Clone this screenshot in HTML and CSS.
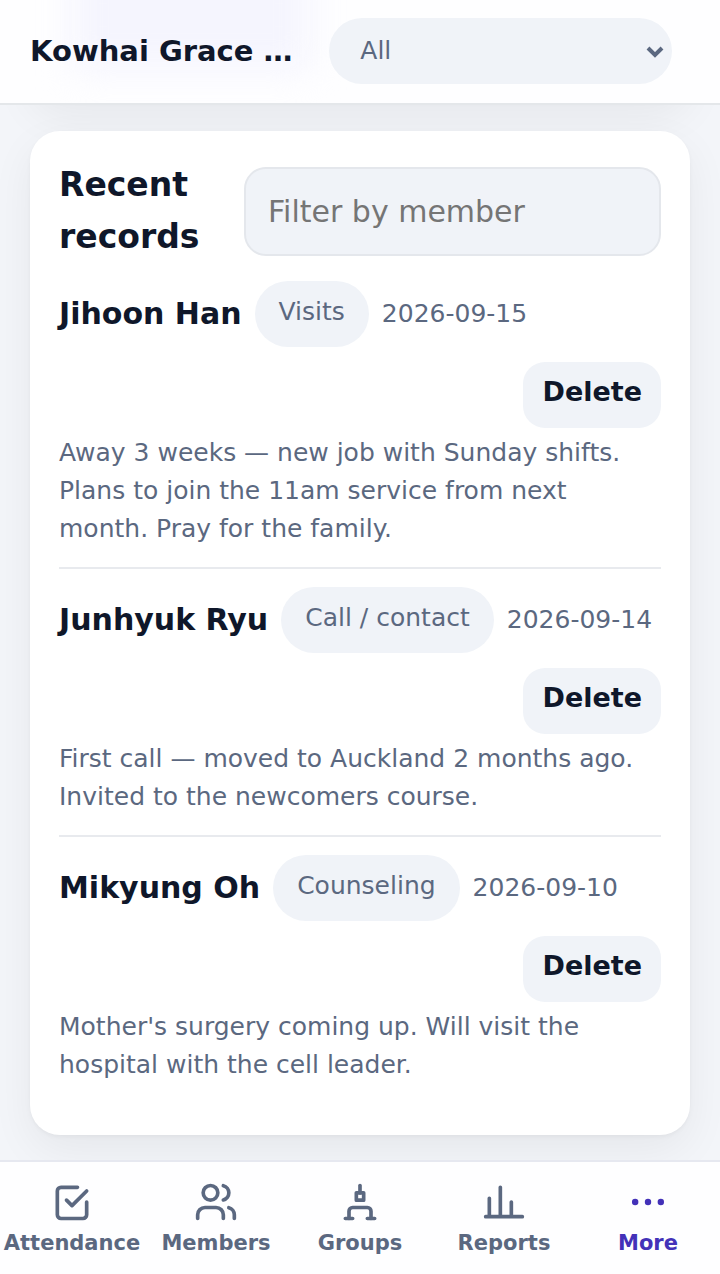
FILE: index.html
```html
<!DOCTYPE html>
<html lang="en">
<head>
    <meta charset="UTF-8">
    <meta name="viewport" content="width=device-width, initial-scale=1.0">
    <title>Kowhai Grace</title>
    <link rel="stylesheet" href="styles.css">
</head>
<body>
    <header class="topbar">
        <div class="brand">Kowhai Grace …</div>
        <div class="scope">
            <select class="scope-select" aria-label="Group">
                <option>All</option>
            </select>
            <svg class="scope-arrow" viewBox="0 0 18 12" aria-hidden="true"><path d="M2 2l7 7 7-7"/></svg>
        </div>
    </header>

    <main class="content">
        <div class="card card-previous"></div>

        <section class="card">
            <div class="card-head">
                <h2 class="card-title">Recent records</h2>
                <input class="filter" type="text" placeholder="Filter by member" aria-label="Filter by member">
            </div>

            <article class="record">
                <div class="record-row">
                    <strong class="name">Jihoon Han</strong>
                    <span class="pill">Visits</span>
                    <span class="date">2026-09-15</span>
                    <button class="delete" type="button">Delete</button>
                </div>
                <p class="note">Away 3 weeks — new job with Sunday shifts. Plans to join the 11am service from next month. Pray for the family.</p>
            </article>

            <article class="record">
                <div class="record-row">
                    <strong class="name">Junhyuk Ryu</strong>
                    <span class="pill">Call / contact</span>
                    <span class="date">2026-09-14</span>
                    <button class="delete" type="button">Delete</button>
                </div>
                <p class="note">First call — moved to Auckland 2 months ago. Invited to the newcomers course.</p>
            </article>

            <article class="record">
                <div class="record-row">
                    <strong class="name">Mikyung Oh</strong>
                    <span class="pill">Counseling</span>
                    <span class="date">2026-09-10</span>
                    <button class="delete" type="button">Delete</button>
                </div>
                <p class="note">Mother's surgery coming up. Will visit the hospital with the cell leader.</p>
            </article>
        </section>
    </main>

    <nav class="tabs">
        <a class="tab" href="#attendance">
            <svg class="icon" viewBox="0 0 24 24"><path d="M9 11l3 3 8-8"/><path d="M20 12v7a2 2 0 0 1-2 2H6a2 2 0 0 1-2-2V6a2 2 0 0 1 2-2h9"/></svg>
            <span>Attendance</span>
        </a>
        <a class="tab" href="#members">
            <svg class="icon" viewBox="0 0 24 24"><circle cx="9" cy="7" r="4"/><path d="M16 21v-2a4 4 0 0 0-4-4H6a4 4 0 0 0-4 4v2"/><path d="M22 21v-2a4 4 0 0 0-3-3.87"/><path d="M16 3.13a4 4 0 0 1 0 7.75"/></svg>
            <span>Members</span>
        </a>
        <a class="tab" href="#groups">
            <svg class="icon" viewBox="0 0 24 24"><path d="M12 3v4"/><path d="M10 7h4v4h-4z"/><path d="M6 21v-4a2 2 0 0 1 2-2h8a2 2 0 0 1 2 2v4"/><path d="M4 21h4M16 21h4"/></svg>
            <span>Groups</span>
        </a>
        <a class="tab" href="#reports">
            <svg class="icon" viewBox="0 0 24 24"><path d="M4 20V10M10 20V4M16 20v-8M2 20h20"/></svg>
            <span>Reports</span>
        </a>
        <a class="tab active" href="#more">
            <svg class="icon icon-dots" viewBox="0 0 24 24"><circle cx="5" cy="12" r="1.75"/><circle cx="12" cy="12" r="1.75"/><circle cx="19" cy="12" r="1.75"/></svg>
            <span>More</span>
        </a>
    </nav>
</body>
</html>
```

FILE: styles.css
```css
* {
    box-sizing: border-box;
}
body {
    margin: 0;
    background-color: #f3f5f9;
    color: #0f172a;
    font-family: "DejaVu Sans", sans-serif;
    font-size: 25px;
    line-height: 38px;
}

/* top bar */
.topbar {
    position: fixed;
    top: 0;
    left: 0;
    right: 0;
    z-index: 2;
    display: flex;
    align-items: center;
    gap: 30px;
    padding: 18px 48px 19px 30px;
    background-color: #fefeff;
    border-bottom: 2px solid #e4e7ea;
    overflow: hidden;
}
.topbar::before {
    content: "";
    position: absolute;
    top: -40px;
    left: 10%;
    width: 33%;
    height: 110px;
    background-color: #f5f5fe;
    filter: blur(18px);
}
.brand {
    position: relative;
    flex: 11;
    font-size: 29px;
    font-weight: bold;
    white-space: nowrap;
}
.scope {
    position: relative;
    flex: 14;
    display: flex;
}
.scope-select {
    width: 100%;
    padding: 14px 48px 14px 31px;
    border: none;
    border-radius: 33px;
    background-color: #f0f3f8;
    color: #5b6880;
    font: inherit;
    appearance: none;
}
.scope-arrow {
    position: absolute;
    right: 8px;
    top: 28px;
    width: 18px;
    height: 12px;
    fill: none;
    stroke: #5b6880;
    stroke-width: 4;
}

/* cards */
.content {
    display: flex;
    flex-direction: column;
    gap: 30px;
    padding: 0 30px 140px;
}
.card {
    padding: 28px 29px 32px;
    border-radius: 30px;
    background-color: #fff;
    box-shadow: 0 2px 4px rgba(0, 0, 0, 0.04), 0 15px 44px rgba(0, 0, 0, 0.06);
}
.card-previous {
    height: 101px;
}
.card-head {
    display: flex;
    align-items: center;
    justify-content: space-between;
    gap: 30px;
}
.card-title {
    flex: 1;
    margin: 0;
    font-size: 33px;
    line-height: 52px;
}
.filter {
    width: 417px;
    min-width: 0;
    padding: 24px 22px;
    border: 2px solid #e4e7ec;
    border-radius: 22px;
    background-color: #f0f3f8;
    font-family: inherit;
    font-size: 30px;
    line-height: 37px;
}
.filter::placeholder {
    color: #757575;
}

/* records */
.record {
    padding: 18px 0 19px;
    border-bottom: 2px solid #e8eaee;
}
.record:last-child {
    border-bottom: none;
}
.record-row {
    display: flex;
    flex-wrap: wrap;
    align-items: center;
    gap: 15px 13px;
}
.name {
    font-size: 30px;
}
.pill {
    padding: 12px 24px 16px;
    border-radius: 33px;
    background-color: #f0f3f8;
    color: #5b6880;
}
.date {
    color: #5b6880;
}
.delete {
    margin-left: auto;
    padding: 11px 19px 17px;
    border: none;
    border-radius: 22px;
    background-color: #f0f3f8;
    color: #0f172a;
    font-family: inherit;
    font-size: 27px;
    font-weight: bold;
    line-height: 38px;
    cursor: pointer;
}
.note {
    margin: 6px 0 0;
    color: #5b6880;
}

/* bottom tabs */
.tabs {
    position: fixed;
    left: 0;
    right: 0;
    bottom: 0;
    z-index: 2;
    display: grid;
    grid-template-columns: repeat(5, 1fr);
    padding: 18px 0 17px;
    background-color: #fefeff;
    border-top: 2px solid #e6e8f0;
}
.tab {
    display: flex;
    flex-direction: column;
    align-items: center;
    gap: 5px;
    color: #5b6880;
    font-size: 21px;
    font-weight: bold;
    line-height: 28px;
    text-decoration: none;
}
.tab.active {
    color: #4331b8;
}
.icon {
    width: 44px;
    height: 44px;
    fill: none;
    stroke: currentColor;
    stroke-width: 2;
    stroke-linecap: round;
    stroke-linejoin: round;
}
.icon-dots {
    fill: currentColor;
    stroke: none;
}
```
